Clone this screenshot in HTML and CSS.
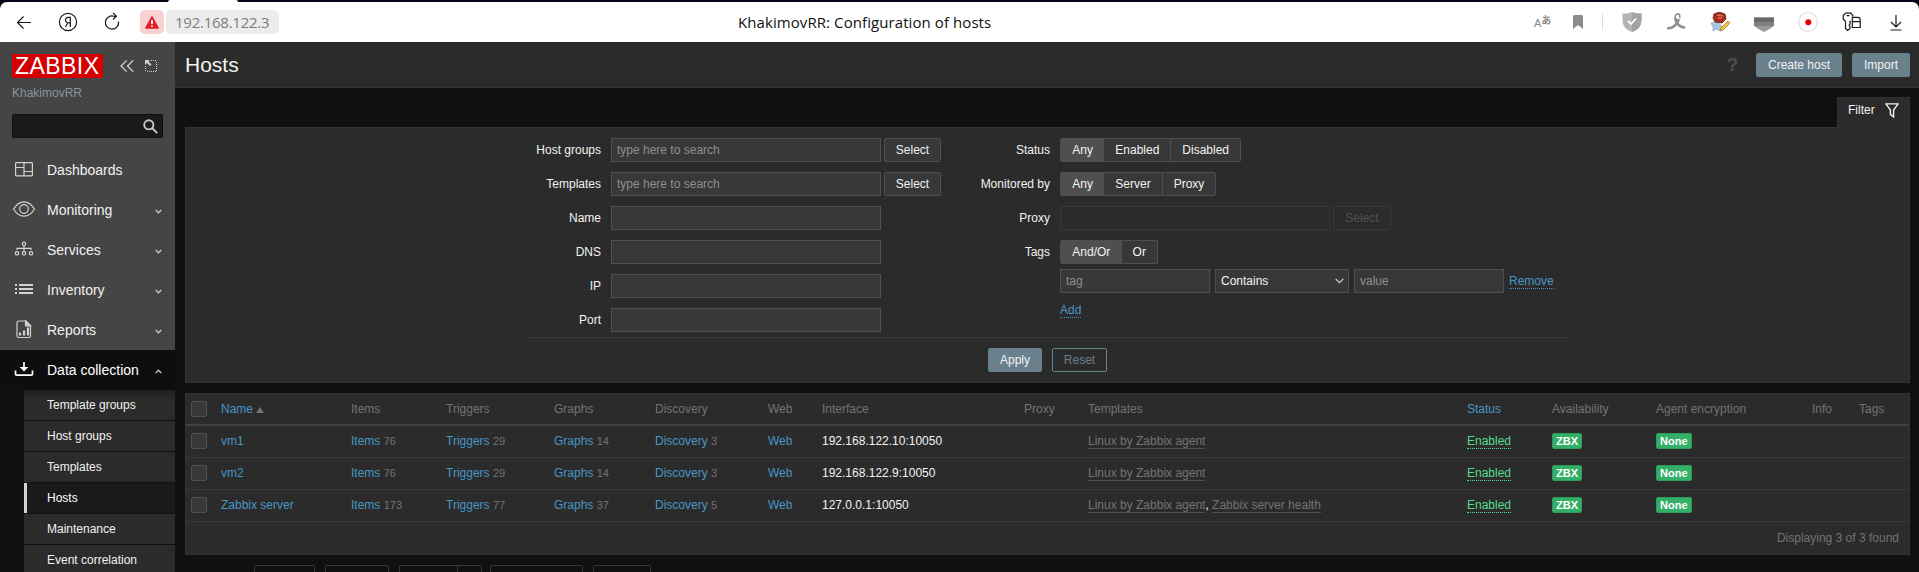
FILE: index.html
```html
<!DOCTYPE html>
<html lang="en">
<head>
<meta charset="utf-8">
<title>KhakimovRR: Configuration of hosts</title>
<link rel="stylesheet" href="styles.css">
</head>
<body>
<div class="tabstrip"><span class="tabstrip-tab"></span></div>
<header class="browser">
  <div class="browser-left">
    <svg class="bi" viewBox="0 0 20 20"><path d="M17 10.500H3.500M9.500 4.500l-6 6 6 6"/></svg>
    <svg class="bi" viewBox="0 0 20 20"><circle cx="10" cy="10" r="8.600"/><path d="M12.300 15V5.400h-1.800c-2 0-3 1.100-3 2.700 0 1.500.9 2.400 2.300 2.700h2.500M9.900 10.800L7.400 15"/></svg>
    <svg class="bi" viewBox="0 0 20 20"><path d="M16.500 9.500a6.600 6.600 0 1 1-4.500-5.200h2M11 .8l3.400 3.500-3.400 3.200"/></svg>
    <span class="warn"><svg width="14" height="13" viewBox="0 0 14 13"><path d="M7 .8L13.200 12H.8z" fill="#e0202c" stroke="#e0202c" stroke-width="1.500" stroke-linejoin="round"/><path d="M7 4v4M7 9.300v1.500" stroke="#fff" stroke-width="1.600"/></svg></span>
    <span class="url">192.168.122.3</span>
  </div>
  <div class="browser-title">KhakimovRR: Configuration of hosts</div>
  <div class="browser-right">
    <span class="translate"><span class="tr-a">A</span><span class="tr-b">あ</span></span>
    <svg class="bi bookmark" viewBox="0 0 20 20"><path d="M5 4.500a1.500 1.500 0 0 1 1.500-1.500h7a1.500 1.500 0 0 1 1.500 1.500V17l-5-4-5 4z" fill="#8c8c8c" stroke="none"/></svg>
    <span class="bsep"></span>
    <svg class="bi" viewBox="0 0 20 20"><path d="M.5 1.500Q6 2 10 0q4 2 9.500 1.500V8q0 9-9.500 12Q.5 17 .5 8z" fill="#b3b3b3" stroke="none"/><path d="M10 0q4 2 9.500 1.500V8q0 9-9.500 12z" fill="#a3a3a3" stroke="none"/><path d="M6 9l3 3 5-5.500" stroke="#fff" stroke-width="1.800"/></svg>
    <svg class="bi" viewBox="0 0 20 20"><path d="M1 16.200c5 .6 9.500-3.200 12-9.200" stroke="#8f8f8f" stroke-width="2.600"/><path d="M9.300 7C7.800.8 15.200 0 13.600 6" stroke="#8f8f8f" stroke-width="1.600"/><path d="M9.200 6c.8 5 4.300 9 10 9.800" stroke="#8f8f8f" stroke-width="2.600"/></svg>
    <svg class="bi" viewBox="0 0 20 20"><path d="M1 11l6-1 5 4-2 5-4-2-3 2 0-4z" fill="#a9c3de" stroke="#8ba9c8" stroke-width=".7"/><path d="M4 2l5-2 6 2 1 5-4 4-7-1-2-4z" fill="#a82e20" stroke="#6f1d17" stroke-width=".8"/><path d="M7 3l6 1M8 6h4" stroke="#ee8a6c"/><path d="M18 9l2 2-7 7-3 1 1-3z" fill="#f2c444" stroke="#b37b20" stroke-width=".8"/></svg>
    <svg class="bi" viewBox="0 0 20 20"><path d="M0 5.500h20V13q-1 2.500-4.500 4L10 20l-5.500-3Q1 15.500 0 13z" fill="#989898" stroke="none"/><path d="M0 5.500h20V10H0z" fill="#686868" stroke="none"/><path d="M0 10h20v4H0z" fill="#808080" stroke="none"/></svg>
    <svg class="bi" viewBox="0 0 20 20"><circle cx="10" cy="10" r="9.400" fill="#fff" stroke="#dedede"/><circle cx="10.300" cy="10.300" r="3" fill="#e60000" stroke="none"/></svg>
    <svg class="bi" viewBox="0 0 20 20"><path d="M10.800 4.500V3.500L8.800 1.200H3.500L1.200 3.500V7l2.300 2.300v7.200L5.700 18.500 8 16.500v-1.700l-.9-1.400.9-1.400V9.300h.8M4.500 3.700h3"/><path d="M10.300 9.600h7.900v5.900h-7.900zM10.300 9.600V5.300h5.500q2.400 0 2.400 2.400v2"/></svg>
    <svg class="bi" viewBox="0 0 20 20"><path d="M10 3v12M5 10l5 5 5-5M4.500 18h11"/></svg>
  </div>
</header>
<div class="app">
  <aside class="sidebar">
    <div class="side-head">
      <span class="logo">ZABBIX</span>
      <svg class="side-ico" width="14" height="12" viewBox="0 0 14 12"><path d="M6.700.4L1 6l5.700 5.600M13.200.4L7.500 6l5.700 5.600"/></svg>
      <svg class="side-ico" width="12" height="12" viewBox="0 0 12 12"><path d="M6 .5h6M11.500 2v10M.5 6v6M2 11.500h9" stroke-dasharray="1 1" stroke-width="1"/><path d="M0 0h5L3.500 1.500l3 3-1.500 1.500-3-3L0 5z" fill="#d2d2d2" stroke="none"/></svg>
    </div>
    <div class="server">KhakimovRR</div>
    <div class="search"><svg width="15" height="15" viewBox="0 0 15 15"><circle cx="5.800" cy="5.800" r="4.600"/><path d="M9 9l5.200 5.200"/></svg></div>
    <nav class="menu">
      <div class="item"><svg class="mi" viewBox="0 0 24 24"><rect x="3.600" y="5.600" width="16.800" height="13.300" rx=".8"/><path d="M12 5.600v13.300M3.600 10.500H12M12 14.500h8.400"/></svg>Dashboards</div>
      <div class="item"><svg class="mi" viewBox="0 0 24 24"><path d="M1.500 12Q6 4.800 12 4.800T22.500 12Q18 19.200 12 19.200T1.500 12z"/><circle cx="12" cy="12" r="4.300"/></svg>Monitoring<svg class="chev" viewBox="0 0 7 5"><path d="M.7 1L3.500 3.800 6.300 1"/></svg></div>
      <div class="item"><svg class="mi" viewBox="0 0 24 24"><circle cx="12" cy="6.800" r="1.700"/><circle cx="5" cy="16.300" r="1.700"/><circle cx="12" cy="16.300" r="1.700"/><circle cx="19" cy="16.300" r="1.700"/><path d="M12 8.500v6M5 13v-1.700h14V13"/></svg>Services<svg class="chev" viewBox="0 0 7 5"><path d="M.7 1L3.500 3.800 6.300 1"/></svg></div>
      <div class="item"><svg class="mi" viewBox="0 0 24 24"><path d="M3 8h2M7 8h14M3 12h2M7 12h14M3 16h2M7 16h14" stroke-width="2"/></svg>Inventory<svg class="chev" viewBox="0 0 7 5"><path d="M.7 1L3.500 3.800 6.300 1"/></svg></div>
      <div class="item"><svg class="mi" viewBox="0 0 24 24"><path d="M6.500 4H14l4.500 4.500v10.200q0 1.800-1.800 1.800H6.500q-1.500 0-1.500-1.500V5.500Q5 4 6.500 4z"/><path d="M13.500 4v5h5z" fill="#d2d2d2"/><path d="M8 18.500v-3M12 18.500v-5M16 18.500v-8" stroke-width="2.200"/></svg>Reports<svg class="chev" viewBox="0 0 7 5"><path d="M.7 1L3.500 3.800 6.300 1"/></svg></div>
      <div class="item item-open"><svg class="mi" viewBox="0 0 24 24"><path d="M3.500 13.500V17q0 1.200 1.200 1.200h14.600q1.200 0 1.200-1.200v-3.500" stroke-width="1.700"/><path d="M12 5v6" stroke-width="1.700"/><path d="M7.700 10h8.600L12 14.500z" fill="#fff" stroke="none"/></svg>Data collection<svg class="chev" viewBox="0 0 7 5"><path d="M.7 4L3.500 1.200 6.300 4"/></svg></div>
    </nav>
    <div class="submenu">
      <div class="sub">Template groups</div>
      <div class="sub">Host groups</div>
      <div class="sub">Templates</div>
      <div class="sub sub-on">Hosts</div>
      <div class="sub">Maintenance</div>
      <div class="sub">Event correlation</div>
    </div>
  </aside>
  <main class="main">
    <div class="title-bar">
      <h1>Hosts</h1>
      <span class="help">?</span>
      <button class="btn primary create">Create host</button>
      <button class="btn primary import">Import</button>
    </div>
    <div class="content">
      <div class="tab-row"><div class="filter-tab">Filter<svg width="14" height="15" viewBox="0 0 14 15"><path d="M.9.900h12.200L8.600 7v7L5.400 11.300V7z"/></svg></div></div>
      <section class="filter">
        <div class="form">
          <div class="col-left">
            <div class="row"><label>Host groups</label><div class="input w270">type here to search</div><button class="btn sel">Select</button></div>
            <div class="row"><label>Templates</label><div class="input w270">type here to search</div><button class="btn sel">Select</button></div>
            <div class="row"><label>Name</label><div class="input w270"></div></div>
            <div class="row"><label>DNS</label><div class="input w270"></div></div>
            <div class="row"><label>IP</label><div class="input w270"></div></div>
            <div class="row"><label>Port</label><div class="input w270"></div></div>
          </div>
          <div class="col-right">
            <div class="row"><label>Status</label><div class="seg"><span class="on">Any</span><span>Enabled</span><span>Disabled</span></div></div>
            <div class="row"><label>Monitored by</label><div class="seg"><span class="on">Any</span><span>Server</span><span>Proxy</span></div></div>
            <div class="row"><label>Proxy</label><div class="input w270 off"></div><button class="btn sel off">Select</button></div>
            <div class="row"><label>Tags</label><div class="seg"><span class="on">And/Or</span><span>Or</span></div></div>
            <div class="tag-row">
              <div class="input w150">tag</div>
              <div class="input select">Contains<svg width="9" height="6" viewBox="0 0 9 6"><path d="M.7.900l3.800 3.800L8.300.900"/></svg></div>
              <div class="input w150">value</div>
              <a class="dot">Remove</a>
            </div>
            <div class="add-row"><a class="dot">Add</a></div>
          </div>
        </div>
        <div class="form-foot"><button class="btn primary">Apply</button><button class="btn ghost">Reset</button></div>
      </section>
      <table class="list">
        <colgroup><col class="c0"><col class="c1"><col class="c2"><col class="c3"><col class="c4"><col class="c5"><col class="c6"><col class="c7"><col class="c8"><col class="c9"><col class="c10"><col class="c11"><col class="c12"><col class="c13"><col class="c14"></colgroup>
        <thead><tr><th><i class="cb"></i></th><th><a>Name</a><i class="sort"></i></th><th>Items</th><th>Triggers</th><th>Graphs</th><th>Discovery</th><th>Web</th><th>Interface</th><th>Proxy</th><th>Templates</th><th><a>Status</a></th><th>Availability</th><th>Agent encryption</th><th>Info</th><th>Tags</th></tr></thead>
        <tbody>
          <tr><td><i class="cb"></i></td><td><a>vm1</a></td><td><a>Items</a> <sup>76</sup></td><td><a>Triggers</a> <sup>29</sup></td><td><a>Graphs</a> <sup>14</sup></td><td><a>Discovery</a> <sup>3</sup></td><td><a>Web</a></td><td>192.168.122.10:10050</td><td></td><td><a class="grey">Linux by Zabbix agent</a></td><td><a class="green">Enabled</a></td><td><span class="badge">ZBX</span></td><td><span class="badge">None</span></td><td></td><td></td></tr>
          <tr><td><i class="cb"></i></td><td><a>vm2</a></td><td><a>Items</a> <sup>76</sup></td><td><a>Triggers</a> <sup>29</sup></td><td><a>Graphs</a> <sup>14</sup></td><td><a>Discovery</a> <sup>3</sup></td><td><a>Web</a></td><td>192.168.122.9:10050</td><td></td><td><a class="grey">Linux by Zabbix agent</a></td><td><a class="green">Enabled</a></td><td><span class="badge">ZBX</span></td><td><span class="badge">None</span></td><td></td><td></td></tr>
          <tr><td><i class="cb"></i></td><td><a>Zabbix server</a></td><td><a>Items</a> <sup>173</sup></td><td><a>Triggers</a> <sup>77</sup></td><td><a>Graphs</a> <sup>37</sup></td><td><a>Discovery</a> <sup>5</sup></td><td><a>Web</a></td><td>127.0.0.1:10050</td><td></td><td><a class="grey">Linux by Zabbix agent</a>, <a class="grey">Zabbix server health</a></td><td><a class="green">Enabled</a></td><td><span class="badge">ZBX</span></td><td><span class="badge">None</span></td><td></td><td></td></tr>
          <tr class="total"><td colspan="15">Displaying 3 of 3 found</td></tr>
        </tbody>
      </table>
      <div class="actions"><span class="act a1"></span><span class="act a2"></span><span class="act a3"></span><span class="act a4"></span><span class="act a5"></span><span class="act a6"></span></div>
    </div>
  </main>
</div>
</body>
</html>
```

FILE: styles.css
```css
* { box-sizing: border-box; }
html, body { margin: 0; height: 572px; overflow: hidden; }
body { background: #0e1012; color: #f2f2f2; font: 12px/14px "Liberation Sans", Arial, sans-serif; }
svg { display: block; flex: none; fill: none; }

/* Browser chrome */
.tabstrip { height: 2px; background: #050519; padding-left: 168px; }
.tabstrip-tab { display: block; width: 70px; height: 2px; background: #fff; border-radius: 3px 3px 0 0; }
.browser { height: 40px; display: flex; align-items: center; background: #fff; border-radius: 7px 7px 0 0; color: #1a1a1a; font-family: "Open Sans", "Noto Sans", sans-serif; }
.browser-left { width: 738px; display: flex; align-items: center; padding-left: 14px; }
.bi { width: 20px; height: 20px; stroke: #1a1a1a; stroke-width: 1.2; }
.browser-left .bi { margin-right: 24px; }
.warn { width: 24px; height: 24px; margin-left: -6px; border-radius: 5px; background: #fbd0d3; display: flex; align-items: center; justify-content: center; }
.url { height: 24px; width: 113px; margin-left: 2px; padding-left: 9px; border-radius: 5px; background: #ececec; color: #7d7d7d; font-size: 15px; line-height: 24px; letter-spacing: -.25px; }
.browser-title { flex: 1; font-size: 15px; line-height: 22px; letter-spacing: .08px; white-space: nowrap; color: #111; }
.browser-right { display: flex; align-items: center; gap: 24px; padding-right: 13px; }
.translate { width: 20px; display: flex; align-items: baseline; color: #8c8c8c; line-height: 20px; padding-left: 2px; margin-right: -8px; font-family: "Liberation Sans", "Noto Sans CJK JP", sans-serif; }
.tr-a { font-size: 11px; position: relative; top: 1px; }
.tr-b { font-size: 10px; font-weight: bold; position: relative; top: -2px; }
.bookmark { margin-right: -10px; }
.bsep { width: 1px; height: 16px; background: #dcdcdc; margin-right: -5px; }

/* Sidebar */
.app { display: flex; height: 530px; overflow: hidden; }
.sidebar { width: 175px; flex: none; background: #0e1012; }
.side-head { height: 36px; padding: 12px 0 0 12px; display: flex; align-items: center; background: #454545; }
.logo { width: 91px; height: 24px; margin-right: 17px; background: #d40000; color: #fff; font-size: 23px; line-height: 25px; letter-spacing: .45px; padding-left: 3px; white-space: nowrap; }
.side-ico { stroke: #d2d2d2; stroke-width: 1.3; margin-right: 11px; }
.server { height: 36px; padding: 8px 12px 0; background: #454545; color: #8a959c; }
.search { height: 24px; width: 151px; margin-left: 12px; border: 1px solid #0b1114; border-radius: 2px; background: #1a1a1a; outline: 12px solid #454545; display: flex; align-items: center; justify-content: flex-end; padding-right: 4px; }
.search svg { stroke: #c8c8c8; stroke-width: 1.9; }
.menu { padding-top: 12px; background: #454545; font-size: 14px; }
.item { height: 40px; padding: 0 13px 0 12px; display: flex; align-items: center; color: #f2f2f2; }
.mi { width: 24px; height: 24px; margin-right: 11px; stroke: #d2d2d2; stroke-width: 1.2; position: relative; top: -1px; }
.item-open { background: #0e0e0e; color: #fff; }
.item-open .mi { stroke: #fff; }
.chev { width: 7px; height: 5px; margin-left: auto; stroke: #c8c8c8; stroke-width: 1.3; position: relative; top: 1px; }
.submenu { margin-left: 24px; display: grid; gap: 1px; }
.sub { height: 30px; padding-left: 23px; line-height: 31px; background: #2b2b2b; }
.sub:first-child { background: linear-gradient(#1f1f1f, #2b2b2b 9px); }
.sub-on { background: #1a1a1a; border-left: 3px solid #d2d2d2; padding-left: 20px; color: #fff; }

/* Main */
.main { flex: 1; }
.title-bar { height: 46px; padding: 0 9px 0 10px; display: flex; align-items: center; background: #2b2b2b; border-bottom: 1px solid #333; }
h1 { margin: 0; font-size: 21px; font-weight: normal; line-height: 24px; }
.help { margin-left: auto; margin-right: 18px; color: #4f4f4f; font-size: 18px; font-weight: bold; line-height: 20px; }
.btn { height: 24px; padding: 0; border: 1px solid #4f4f4f; border-radius: 2px; background: #383838; color: #f2f2f2; font: 12px/20px "Liberation Sans", Arial, sans-serif; text-align: center; }
.primary { background: #69808d; border-color: #69808d; }
.create { width: 86px; margin-right: 10px; }
.import { width: 58px; }
.content { padding: 9px 9px 0 10px; }
.tab-row { display: flex; justify-content: flex-end; height: 30px; }
.filter-tab { width: 73px; height: 31px; padding: 0 10px 6px; border: 1px solid #303030; border-bottom: 0; background: #2b2b2b; display: flex; align-items: center; justify-content: space-between; position: relative; z-index: 1; }
.filter-tab svg { stroke: #f2f2f2; stroke-width: 1.4; }
.filter { height: 256px; border: 1px solid #333; background: #2b2b2b; }
.form { width: 1043px; height: 200px; margin: 10px auto 0; display: flex; border-bottom: 1px solid #383838; }
.col-left { width: 415px; display: grid; gap: 10px; align-content: start; }
.col-right { flex: 1; }
.col-right .row { margin-bottom: 10px; }
.row { height: 24px; display: flex; align-items: center; }
.row label { width: 75px; margin-right: 10px; text-align: right; white-space: nowrap; }
.col-right label { width: 109px; }
.input { height: 24px; padding-left: 5px; border: 1px solid #4f4f4f; background: #383838; color: #8f8f8f; line-height: 22px; }
.w270 { width: 270px; }
.w150 { width: 150px; }
.sel { width: 57px; margin-left: 3px; }
.off.input { background: #2b2b2b; border-color: #383838; }
.off.btn { width: 58px; background: #2b2b2b; border-color: #383838; color: #4f4f4f; }
.seg { display: flex; height: 24px; border: 1px solid #4f4f4f; border-radius: 2px; background: #383838; line-height: 22px; }
.seg span { padding: 0 11px; }
.seg .on { background: #4f4f4f; padding: 0 11.300px; }
.seg span + span + span { border-left: 1px solid #4f4f4f; }
.tag-row { display: flex; align-items: center; gap: 5px; margin: -5px 0 0 119px; }
.select { width: 134px; display: flex; align-items: center; justify-content: space-between; padding-right: 4px; color: #f2f2f2; }
.select svg { stroke: #d2d2d2; stroke-width: 1.300; }
a { color: #4796c4; text-decoration: none; }
.dot { border-bottom: 1px dotted #4796c4; }
.add-row { margin: 10px 0 0 119px; display: flex; }
.form-foot { display: flex; justify-content: center; gap: 10px; padding-top: 10px; }
.form-foot .btn { width: 54px; }
.form-foot .ghost { width: 55px; background: transparent; border-color: #69808d; color: #69808d; }

/* Host list */
.list { width: 1725px; margin-top: 10px; table-layout: fixed; border-spacing: 0; border: 1px solid #333; background: #2b2b2b; }
.list th { height: 32px; padding: 0 5px 1px; font-weight: normal; text-align: left; color: #737373; border-bottom: 2px solid #404040; white-space: nowrap; }
.list td { height: 32px; padding: 0 5px 2px; border-bottom: 1px solid #383838; white-space: nowrap; }
.list .total td { border: 0; text-align: right; padding: 0 10px 0 0; color: #737373; }
.c0 { width: 30px; } .c1 { width: 130px; } .c2 { width: 95px; } .c3 { width: 108px; }
.c4 { width: 101px; } .c5 { width: 113px; } .c6 { width: 54px; } .c7 { width: 202px; }
.c8 { width: 64px; } .c9 { width: 379px; } .c10 { width: 85px; } .c11 { width: 104px; }
.c12 { width: 156px; } .c13 { width: 47px; } .c14 { width: 55px; }
.cb { display: block; width: 16px; height: 16px; border: 1px solid #4f4f4f; border-radius: 2px; background: #383838; }
.sort { display: inline-block; margin-left: 3px; border: 4px solid transparent; border-top: 0; border-bottom: 6px solid #737373; }
sup { font-size: 11px; line-height: 12px; vertical-align: baseline; color: #737373; }
.grey { color: #737373; border-bottom: 1px solid #45525a; }
.green { color: #59db8f; border-bottom: 1px dotted #59db8f; }
.badge { display: inline-block; height: 16px; padding: 0 3px; border: 1px solid #2d9a5b; border-radius: 2px; background: #34af67; color: #fff; font-size: 11px; font-weight: bold; line-height: 15px; vertical-align: middle; }

/* Bulk actions */
.actions { display: flex; margin: 10px 0 0 69px; }
.act { height: 24px; border: 1px solid #383838; border-radius: 2px; margin-right: 10px; }
.a1 { width: 61px; } .a2 { width: 64px; }
.a3 { width: 59px; margin-right: 0; border-radius: 2px 0 0 2px; }
.a4 { width: 24px; margin-right: 8px; border-left: 0; border-radius: 0 2px 2px 0; }
.a5 { width: 93px; } .a6 { width: 58px; }
```
